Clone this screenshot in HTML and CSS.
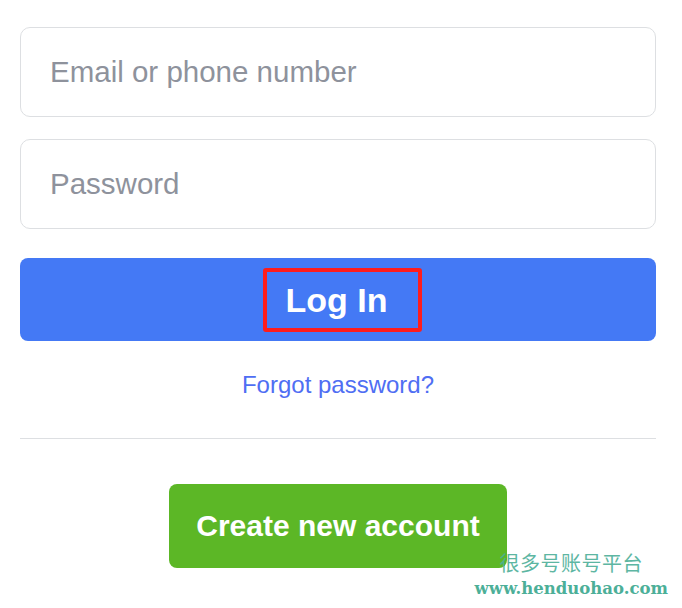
FILE: index.html
```html
<html>
<head>
	<title>Log In</title>
	<link rel="stylesheet" href="styles.css">
</head>
<body>
	<main class="login">
		<form class="login-form" action="#">
			<input type="text" class="field" placeholder="Email or phone number">
			<input type="password" class="field" placeholder="Password">
			<button type="button" class="btn-login"><span class="mark">Log In</span></button>
		</form>
		<a href="#" class="forgot">Forgot password?</a>
		<hr class="divider">
		<div class="create-row">
			<button type="button" class="btn-create">Create new account</button>
		</div>
	</main>
	<div class="watermark">
		<div class="wm-cn">很多号账号平台</div>
		<div class="wm-url">www.henduohao.com</div>
	</div>
</body>
</html>
```

FILE: styles.css
```css
*, *:before, *:after {
	box-sizing: border-box;
}
body {
	margin: 0;
	background: #fff;
	font-family: "Liberation Sans", Arial, sans-serif;
	color: #1c1e21;
}
.login {
	padding: 27px 26px 0 20px;
}
.login-form {
	display: flex;
	flex-direction: column;
	margin: 0;
}
.field {
	height: 90px;
	margin: 0 0 22px;
	padding: 0 29px;
	border: 1px solid #dddfe2;
	border-radius: 10px;
	font-family: "Liberation Sans", Arial, sans-serif;
	font-size: 29.5px;
	color: #1c1e21;
	outline: 0;
}
.field::placeholder {
	color: #8e929c;
}
.field + .field + .btn-login {
	margin-top: 7px;
}
.btn-login {
	height: 83px;
	border: 0;
	border-radius: 8px;
	background: #4479f5;
	color: #fff;
	display: flex;
	align-items: center;
	justify-content: center;
	padding: 0;
	cursor: pointer;
}
.mark {
	display: inline-block;
	margin-left: 9px;
	padding: 6px 31px 6px 19px;
	border: 4px solid #fe1c1c;
	border-radius: 3px;
	font-family: "Liberation Sans", Arial, sans-serif;
	font-weight: bold;
	font-size: 34px;
	line-height: 44px;
}
.forgot {
	display: block;
	margin-top: 29px;
	text-align: center;
	font-size: 24px;
	line-height: 30px;
	color: #4f6ef3;
	text-decoration: none;
}
.divider {
	margin: 38px 0 0;
	border: 0;
	border-top: 1px solid #dddfe2;
}
.create-row {
	display: flex;
	justify-content: center;
	margin-top: 45px;
}
.btn-create {
	height: 84px;
	padding: 0 27px;
	border: 0;
	border-radius: 8px;
	background: #5cb726;
	color: #fff;
	font-family: "Liberation Sans", Arial, sans-serif;
	font-weight: bold;
	font-size: 30px;
	cursor: pointer;
}
.watermark {
	position: absolute;
	right: 14px;
	top: 551px;
	text-align: right;
	color: #4caf98;
}
.wm-cn {
	font-family: "Noto Sans CJK SC", sans-serif;
	font-size: 20px;
	line-height: 24px;
	letter-spacing: 0.5px;
	margin-right: 25px;
	opacity: 0.9;
}
.wm-url {
	font-family: "DejaVu Serif", serif;
	font-weight: bold;
	font-size: 16.5px;
	line-height: 22px;
	margin-top: 3px;
}
```
